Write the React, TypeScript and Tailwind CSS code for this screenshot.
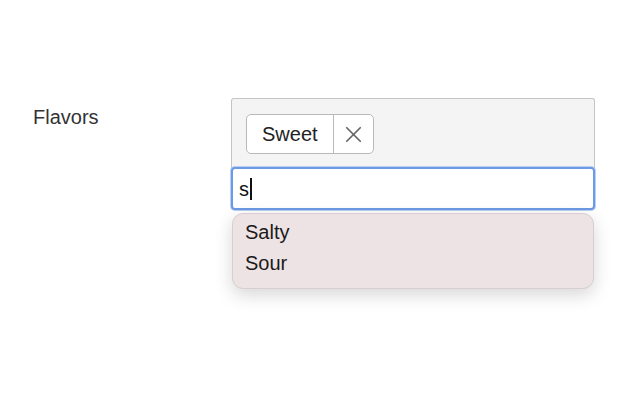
import { X } from "lucide-react";

export default function App() {
  return (
    <div
      className="w-[640px] h-[400px] bg-white text-[20px] text-[#222]"
      style={{ fontFamily: '"Liberation Sans", Arial, sans-serif' }}
    >
      <div className="flex pt-[98px]">
        {/* Label */}
        <div className="w-[231px] pl-[33px] pt-[4px] text-[#333]">Flavors</div>

        {/* Multi-select */}
        <div className="relative w-[364px]">
          <div className="h-[72px] border border-[#c4c4c4] border-b-0 rounded-t-[3px] bg-[#f4f4f4] pl-[14px] pt-[15px]">
            <div className="inline-flex h-[40px] items-stretch bg-white border border-[#b9b9b9] rounded-[5px]">
              <span className="flex items-center px-[15px] text-[#222]">Sweet</span>
              <span className="flex w-[40px] items-center justify-center border-l border-[#b9b9b9] text-[#666]">
                <X className="w-[27px] h-[27px]" strokeWidth={1.5} />
              </span>
            </div>
          </div>

          <div className="flex h-[43px] -mt-[3px] items-center rounded-[4px] border-2 border-[#6d9ae4] bg-white pl-[6px] shadow-[0_0_0_1px_#b9cff3]">
            <span className="text-[#111]">s</span>
            <span className="ml-[1px] w-[1.5px] h-[22px] bg-[#111]" />
          </div>

          <div className="mt-[3px] mx-[1px] rounded-[11px] border border-[#d8cece] bg-[#ede3e4] pt-[3px] pb-[9px] pl-[12px] shadow-[0_6px_18px_rgba(0,0,0,0.16)]">
            <div className="leading-[31px] text-[#1a1a1a]">Salty</div>
            <div className="leading-[31px] text-[#1a1a1a]">Sour</div>
          </div>
        </div>
      </div>
    </div>
  );
}
